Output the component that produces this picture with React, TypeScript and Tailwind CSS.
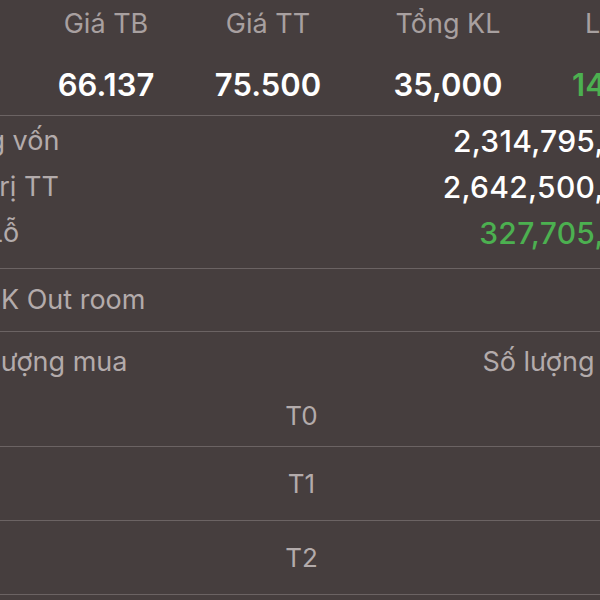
const summary = [
  { label: "Giá TB", value: "66.137", green: false },
  { label: "Giá TT", value: "75.500", green: false },
  { label: "Tổng KL", value: "35,000", green: false },
  { label: "Lãi/Lỗ", value: "14.16%", green: true },
];

const colWidths = ["w-[162px]", "w-[162px]", "w-[198px]", "w-[154px]"];

const totals = [
  { label: "Tổng vốn", value: "2,314,795,000", green: false },
  { label: "Giá trị TT", value: "2,642,500,000", green: false },
  { label: "Lãi/Lỗ", value: "327,705,000", green: true },
];

const settlement = ["T0", "T1", "T2"];

export default function App() {
  return (
    <div className="h-[600px] w-[600px] overflow-hidden bg-[#463e3e] font-[Inter,sans-serif]">
      <div className="-ml-[75px] w-[753px]">
        <section className="border-b border-[#6b6363] px-4 pt-[8px] pb-[12px]">
          <div className="flex pl-[84px]">
            {summary.map((s, i) => (
              <div key={s.label} className={`${colWidths[i]} shrink-0 text-center`}>
                <div className="text-[27px] leading-[32px] text-[#a8a0a0]">{s.label}</div>
                <div
                  className={`mt-[27px] text-[31px] leading-[36px] font-semibold ${
                    s.green ? "text-[#4cb050]" : "text-white"
                  }`}
                >
                  {s.value}
                </div>
              </div>
            ))}
          </div>
        </section>

        <section className="border-b border-[#6b6363] px-4 pt-[2px] pb-[12px]">
          {totals.map((t) => (
            <div key={t.label} className="flex h-[46px] items-center justify-between">
              <span className="text-[27px] text-[#b3abab]">{t.label}</span>
              <span
                className={`text-[30px] font-medium tracking-[0.3px] ${
                  t.green ? "text-[#4cb050]" : "text-white"
                }`}
              >
                {t.value}
              </span>
            </div>
          ))}
        </section>

        <div className="flex h-[63px] items-center border-b border-[#6b6363] px-4">
          <span className="text-[27px] text-[#b3abab]">SL CK Out room</span>
        </div>

        <div className="flex h-[60px] items-center justify-between pr-[28px] pl-[28px]">
          <span className="text-[27px] text-[#b3abab]">Số lượng mua</span>
          <span className="text-[27px] text-[#b3abab]">Số lượng bán</span>
        </div>

        {settlement.map((t, i) => (
          <div
            key={t}
            className={`flex items-center justify-center border-b border-[#6b6363] ${
              i === 0 ? "h-[55px] pb-[8px]" : "h-[74px]"
            }`}
          >
            <span className="text-[26px] text-[#b3abab]">{t}</span>
          </div>
        ))}
      </div>
    </div>
  );
}
